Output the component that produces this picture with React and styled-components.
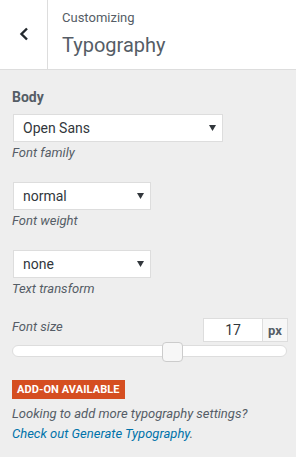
import React from "react";
import styled, { createGlobalStyle } from "styled-components";

const Global = createGlobalStyle`
  html, body { margin: 0; padding: 0; background: #eeeeee; }
  body { font-family: Roboto, "Noto Sans", sans-serif; color: #555d66; }
  * { box-sizing: border-box; }
`;

const Panel = styled.div`
  width: 296px;
  height: 457px;
  background: #eeeeee;
  overflow: hidden;
`;

const Header = styled.div`
  display: flex;
  height: 70px;
  background: #fff;
  border-bottom: 1px solid #dddddd;
`;

const Back = styled.div`
  width: 48px;
  display: flex;
  align-items: center;
  justify-content: center;
  border-right: 1px solid #dddddd;
  color: #23282d;
  padding-bottom: 2px;
`;

const Titles = styled.div`
  display: flex;
  flex-direction: column;
  padding: 9px 0 0 14px;
`;

const Small = styled.span`
  font-size: 13px;
  line-height: 18px;
  color: #555d66;
`;

const Big = styled.span`
  font-size: 20px;
  line-height: 26px;
  margin-top: 5px;
  color: #555d66;
`;

const Body = styled.div`
  padding: 18px 9px 0 12px;
  display: flex;
  flex-direction: column;
`;

const Heading = styled.div`
  font-weight: 700;
  font-size: 14px;
  line-height: 18px;
  color: #555d66;
`;

const Select = styled.div`
  margin-top: ${(p) => p.$mt}px;
  margin-left: 1px;
  width: ${(p) => p.$w}px;
  height: 28px;
  background: #fff;
  border: 1px solid #dddddd;
  display: flex;
  align-items: center;
  justify-content: space-between;
  padding: 0 6px 0 9px;
  font-size: 14px;
  color: #32373c;
`;

const Desc = styled.div`
  font-style: italic;
  font-size: 13px;
  line-height: 18px;
  margin-top: ${(p) => (p.$mt === undefined ? 2 : p.$mt)}px;
  color: #555d66;
`;

const SizeRow = styled.div`
  display: flex;
  justify-content: space-between;
  align-items: flex-start;
  margin-top: 20px;
`;

const InputGroup = styled.div`
  display: flex;
  height: 24px;
  margin-right: -1px;
`;

const NumInput = styled.div`
  width: 60px;
  background: #fff;
  border: 1px solid #dddddd;
  display: flex;
  align-items: center;
  justify-content: center;
  font-size: 14px;
  color: #32373c;
`;

const Unit = styled.div`
  width: 25px;
  border: 1px solid #dddddd;
  border-left: none;
  background: #f7f7f7;
  display: flex;
  align-items: center;
  justify-content: center;
  font-size: 13px;
  font-weight: 700;
  color: #555d66;
`;

const Track = styled.div`
  position: relative;
  margin-top: 3px;
  height: 12px;
  background: #fff;
  border: 1px solid #dddddd;
  border-radius: 6px;
`;

const Thumb = styled.div`
  position: absolute;
  left: 149px;
  top: -4px;
  width: 21px;
  height: 20px;
  background: #f7f7f7;
  border: 1px solid #cccccc;
  border-radius: 4px;
`;

const Badge = styled.div`
  align-self: flex-start;
  margin-top: 23px;
  background: #d54e21;
  color: #fff;
  font-weight: 700;
  font-size: 11px;
  line-height: 19px;
  height: 19px;
  padding: 0 5px;
  letter-spacing: 0.1px;
  text-transform: uppercase;
`;

const Note = styled.div`
  font-style: italic;
  font-size: 13px;
  line-height: 20px;
  margin-top: 5px;
  color: #555d66;
`;

const Link = styled.a`
  color: #0073aa;
  text-decoration: none;
`;

const Arrow = () => (
  <svg width="7" height="6" viewBox="0 0 7 6">
    <path d="M0 0h7L3.5 6z" fill="#32373c" />
  </svg>
);

export default function App() {
  return (
    <Panel>
      <Global />
      <Header>
        <Back>
          <svg width="10" height="14" viewBox="0 0 10 14">
            <path d="M8 1.5L2.5 7L8 12.5" fill="none" stroke="#23282d" strokeWidth="2.4" />
          </svg>
        </Back>
        <Titles>
          <Small>Customizing</Small>
          <Big>Typography</Big>
        </Titles>
      </Header>
      <Body>
        <Heading>Body</Heading>
        <Select $mt={8} $w={210}>
          Open Sans
          <Arrow />
        </Select>
        <Desc>Font family</Desc>
        <Select $mt={20} $w={138}>
          normal
          <Arrow />
        </Select>
        <Desc>Font weight</Desc>
        <Select $mt={20} $w={138}>
          none
          <Arrow />
        </Select>
        <Desc>Text transform</Desc>
        <SizeRow>
          <Desc $mt={0}>Font size</Desc>
          <InputGroup>
            <NumInput>17</NumInput>
            <Unit>px</Unit>
          </InputGroup>
        </SizeRow>
        <Track>
          <Thumb />
        </Track>
        <Badge>Add-on available</Badge>
        <Note>
          Looking to add more typography settings?
          <br />
          <Link href="#">Check out Generate Typography</Link>.
        </Note>
      </Body>
    </Panel>
  );
}
